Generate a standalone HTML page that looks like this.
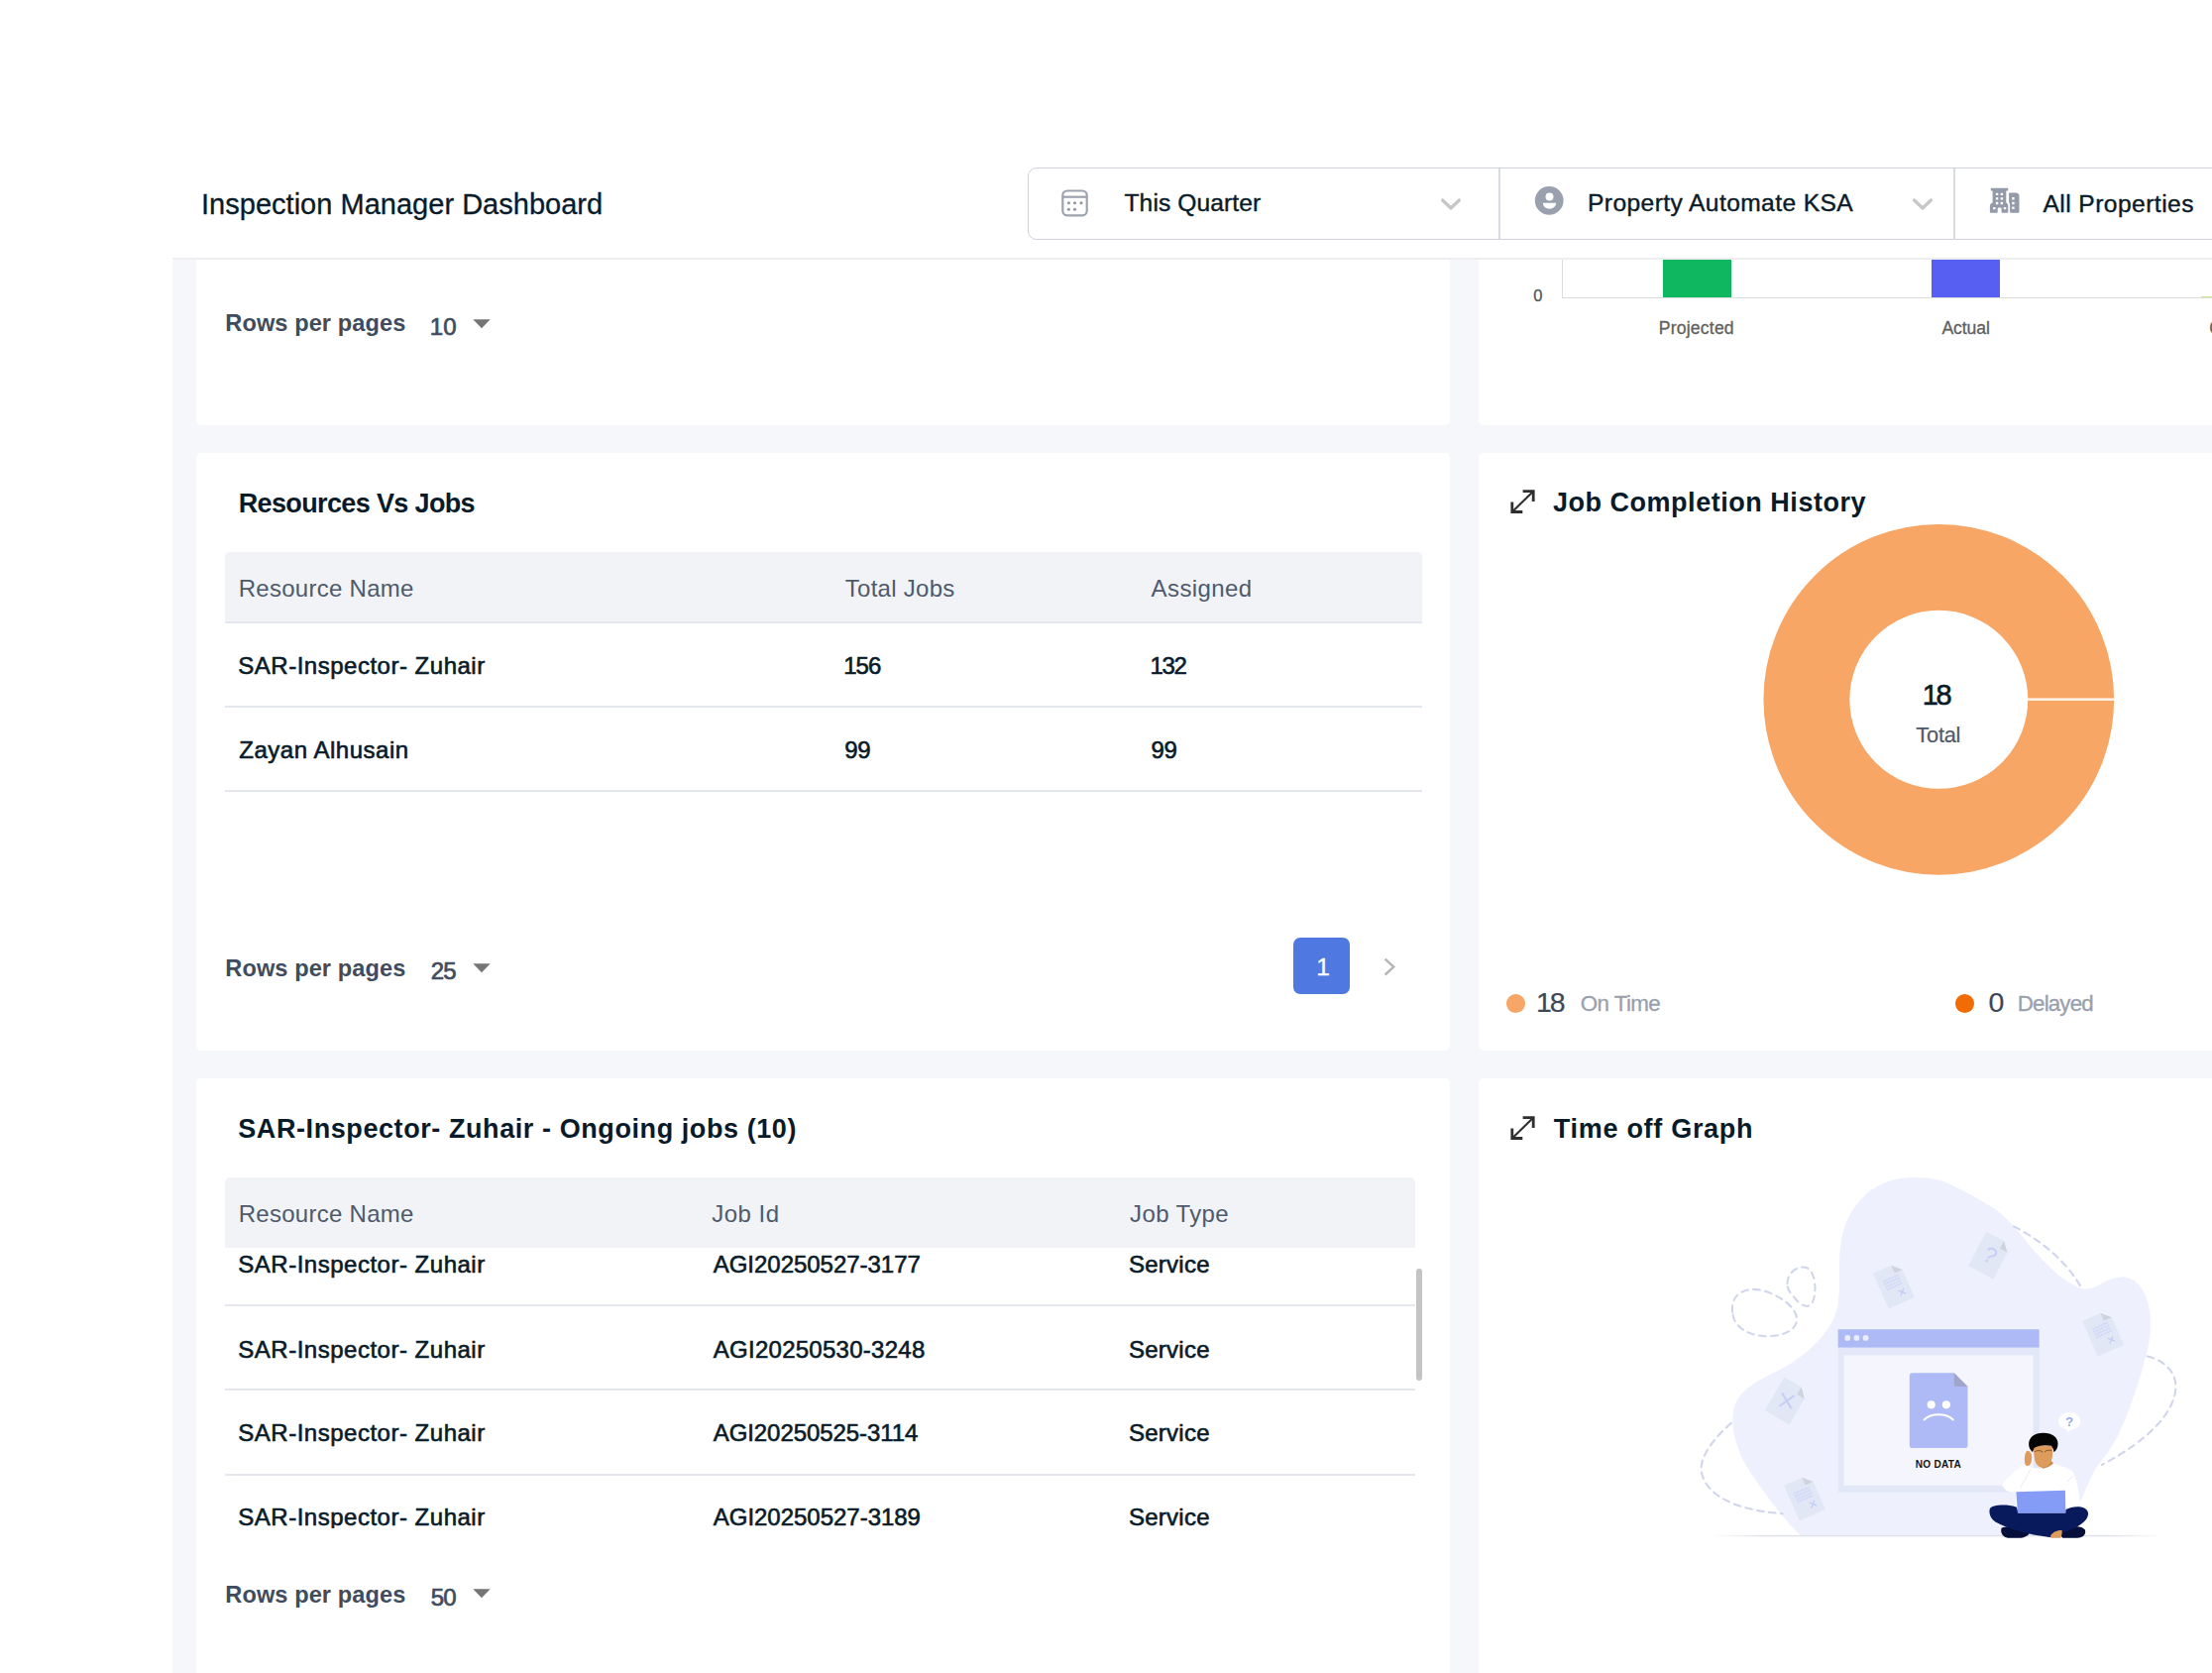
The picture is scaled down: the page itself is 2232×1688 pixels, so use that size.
<!DOCTYPE html>
<html lang="en">
<head>
<meta charset="utf-8">
<title>Inspection Manager Dashboard</title>
<style>
html,body{margin:0;padding:0;}
body{width:2232px;height:1688px;overflow:hidden;background:#fff;position:relative;font-family:"Liberation Sans", sans-serif;color:#091b29;}
.abs{position:absolute;}
.t{position:absolute;white-space:pre;line-height:1;}
.card{position:absolute;background:#fff;border-radius:5px;}
.thead{position:absolute;background:#f2f3f7;border-radius:5px 5px 0 0;}
</style>
</head>
<body>
<div class="abs" style="left:174px;top:250px;width:2058px;height:1438px;background:#f6f7fb"></div>

<!-- cards -->
<div class="card" style="left:197.7px;top:200px;width:1265.8px;height:228.7px;"></div>
<div class="card" style="left:197.7px;top:457.2px;width:1265.8px;height:602.5px;"></div>
<div class="card" style="left:197.7px;top:1088.2px;width:1265.8px;height:700px;"></div>
<div class="card" style="left:1491.5px;top:200px;width:900px;height:228.7px;"></div>
<div class="card" style="left:1491.5px;top:457.2px;width:900px;height:602.5px;"></div>
<div class="card" style="left:1491.5px;top:1088.2px;width:900px;height:700px;"></div>

<!-- card 1: tail of a table -->
<div class="t" style="left:227.30px;top:315.12px;font-size:23.6px;font-weight:bold;color:#404c5e;letter-spacing:0.08px;">Rows per pages</div>
<div class="t" style="left:433.80px;top:317.58px;font-size:24px;font-weight:normal;color:#404c5e;letter-spacing:0.0px;-webkit-text-stroke:0.7px #404c5e;">10</div>
<svg class="abs" style="left:476.8px;top:322px" width="18" height="10" viewBox="0 0 18 10"><path d="M0.3 0.3H17.7L9 9.3Z" fill="#757575"/></svg>

<!-- card 4: bar chart tail -->
<div class="abs" style="left:1575.5px;top:255px;width:1.5px;height:46px;background:#dcdcdc"></div>
<div class="abs" style="left:1575.5px;top:299.6px;width:700px;height:1.5px;background:#dcdcdc"></div>
<div class="abs" style="left:1678px;top:250px;width:69px;height:49.7px;background:#10b761"></div>
<div class="abs" style="left:1949.2px;top:250px;width:69.2px;height:49.7px;background:#575ff3"></div>
<div class="abs" style="left:2220.5px;top:298.6px;width:20px;height:1.5px;background:#cfe58f"></div>
<div class="t" style="left:1547.30px;top:290.13px;font-size:16.5px;font-weight:normal;color:#555;letter-spacing:0px;-webkit-text-stroke:0.3px #555;">0</div>
<div class="t" style="left:1673.80px;top:323.30px;font-size:17.6px;font-weight:normal;color:#606060;letter-spacing:0.19px;-webkit-text-stroke:0.3px #606060;">Projected</div>
<div class="t" style="left:1959.40px;top:323.30px;font-size:17.6px;font-weight:normal;color:#606060;letter-spacing:-0.08px;-webkit-text-stroke:0.3px #606060;">Actual</div>
<div class="t" style="left:2229.30px;top:323.30px;font-size:17.6px;font-weight:normal;color:#606060;letter-spacing:0px;-webkit-text-stroke:0.3px #606060;">C</div>

<!-- card 2: Resources Vs Jobs -->
<div class="thead" style="left:226.7px;top:557px;width:1208px;height:71px;"></div>
<div class="abs" style="left:226.7px;top:626.8px;width:1208px;height:2px;background:#e4e8ee"></div>
<div class="abs" style="left:226.7px;top:711.7px;width:1208px;height:2px;background:#e4e8ee"></div>
<div class="abs" style="left:226.7px;top:796.8px;width:1208px;height:2px;background:#e4e8ee"></div>
<div class="abs" style="left:1305.3px;top:946.2px;width:57px;height:57px;border-radius:7px;background:#5078e1"></div>
<svg class="abs" style="left:1394px;top:964px" width="18" height="24" viewBox="0 0 18 24" fill="none" stroke="#b5b5b5" stroke-width="2.4" stroke-linecap="square"><path d="M4.5 4.5L12.3 11.6L4.5 18.7"/></svg>
<div class="t" style="left:240.75px;top:494.74px;font-size:27px;font-weight:bold;color:#091b29;letter-spacing:-0.64px;">Resources Vs Jobs</div>
<div class="t" style="left:240.75px;top:582.28px;font-size:24px;font-weight:normal;color:#4e5a6b;letter-spacing:0.27px;">Resource Name</div>
<div class="t" style="left:852.80px;top:582.28px;font-size:24px;font-weight:normal;color:#4e5a6b;letter-spacing:0.27px;">Total Jobs</div>
<div class="t" style="left:1161.60px;top:582.28px;font-size:24px;font-weight:normal;color:#4e5a6b;letter-spacing:0.41px;">Assigned</div>
<div class="t" style="left:240.25px;top:659.78px;font-size:24px;font-weight:normal;color:#091b29;letter-spacing:0.51px;-webkit-text-stroke:0.6px #091b29;">SAR-Inspector- Zuhair</div>
<div class="t" style="left:851.20px;top:659.78px;font-size:24px;font-weight:normal;color:#091b29;letter-spacing:-1.0px;-webkit-text-stroke:0.6px #091b29;">156</div>
<div class="t" style="left:1160.60px;top:659.78px;font-size:24px;font-weight:normal;color:#091b29;letter-spacing:-1.45px;-webkit-text-stroke:0.6px #091b29;">132</div>
<div class="t" style="left:241.25px;top:744.78px;font-size:24px;font-weight:normal;color:#091b29;letter-spacing:0.52px;-webkit-text-stroke:0.6px #091b29;">Zayan Alhusain</div>
<div class="t" style="left:852.20px;top:744.78px;font-size:24px;font-weight:normal;color:#091b29;letter-spacing:-0.2px;-webkit-text-stroke:0.6px #091b29;">99</div>
<div class="t" style="left:1161.60px;top:744.78px;font-size:24px;font-weight:normal;color:#091b29;letter-spacing:-0.4px;-webkit-text-stroke:0.6px #091b29;">99</div>
<div class="t" style="left:227.30px;top:965.52px;font-size:23.6px;font-weight:bold;color:#404c5e;letter-spacing:0.08px;">Rows per pages</div>
<div class="t" style="left:434.80px;top:967.98px;font-size:24px;font-weight:normal;color:#404c5e;letter-spacing:-1.0px;-webkit-text-stroke:0.7px #404c5e;">25</div>
<div class="t" style="left:1328.20px;top:964.16px;font-size:24.5px;font-weight:normal;color:#fff;letter-spacing:0px;-webkit-text-stroke:0.3px #fff;">1</div>
<svg class="abs" style="left:476.8px;top:971.8px" width="18" height="10" viewBox="0 0 18 10"><path d="M0.3 0.3H17.7L9 9.3Z" fill="#757575"/></svg>

<!-- card 3: Ongoing jobs -->
<div class="abs" style="left:226.7px;top:1200px;width:1208px;height:342px;overflow:hidden">
<div class="abs" style="left:-226.7px;top:-1200px;width:2232px;height:1688px">
<div class="t" style="left:240.25px;top:1264.28px;font-size:24px;font-weight:normal;color:#091b29;letter-spacing:0.51px;-webkit-text-stroke:0.6px #091b29;">SAR-Inspector- Zuhair</div>
<div class="t" style="left:719.75px;top:1264.28px;font-size:24px;font-weight:normal;color:#091b29;letter-spacing:-0.03px;-webkit-text-stroke:0.6px #091b29;">AGI20250527-3177</div>
<div class="t" style="left:1139.00px;top:1264.28px;font-size:24px;font-weight:normal;color:#091b29;letter-spacing:0.25px;-webkit-text-stroke:0.6px #091b29;">Service</div>
<div class="t" style="left:240.25px;top:1349.78px;font-size:24px;font-weight:normal;color:#091b29;letter-spacing:0.51px;-webkit-text-stroke:0.6px #091b29;">SAR-Inspector- Zuhair</div>
<div class="t" style="left:719.75px;top:1349.78px;font-size:24px;font-weight:normal;color:#091b29;letter-spacing:0.27px;-webkit-text-stroke:0.6px #091b29;">AGI20250530-3248</div>
<div class="t" style="left:1139.00px;top:1349.78px;font-size:24px;font-weight:normal;color:#091b29;letter-spacing:0.25px;-webkit-text-stroke:0.6px #091b29;">Service</div>
<div class="t" style="left:240.25px;top:1433.85px;font-size:24px;font-weight:normal;color:#091b29;letter-spacing:0.51px;-webkit-text-stroke:0.6px #091b29;">SAR-Inspector- Zuhair</div>
<div class="t" style="left:719.75px;top:1433.85px;font-size:24px;font-weight:normal;color:#091b29;letter-spacing:-0.08px;-webkit-text-stroke:0.6px #091b29;">AGI20250525-3114</div>
<div class="t" style="left:1139.00px;top:1433.85px;font-size:24px;font-weight:normal;color:#091b29;letter-spacing:0.25px;-webkit-text-stroke:0.6px #091b29;">Service</div>
<div class="t" style="left:240.25px;top:1519.35px;font-size:24px;font-weight:normal;color:#091b29;letter-spacing:0.51px;-webkit-text-stroke:0.6px #091b29;">SAR-Inspector- Zuhair</div>
<div class="t" style="left:719.75px;top:1519.35px;font-size:24px;font-weight:normal;color:#091b29;letter-spacing:-0.02px;-webkit-text-stroke:0.6px #091b29;">AGI20250527-3189</div>
<div class="t" style="left:1139.00px;top:1519.35px;font-size:24px;font-weight:normal;color:#091b29;letter-spacing:0.25px;-webkit-text-stroke:0.6px #091b29;">Service</div>
<div class="abs" style="left:226.7px;top:1316px;width:1201.5px;height:2px;background:#e4e8ee"></div>
<div class="abs" style="left:226.7px;top:1401.3px;width:1201.5px;height:2px;background:#e4e8ee"></div>
<div class="abs" style="left:226.7px;top:1486.6px;width:1201.5px;height:2px;background:#e4e8ee"></div>
</div></div>
<div class="thead" style="left:226.7px;top:1187.7px;width:1201.5px;height:71.5px;"></div>
<div class="t" style="left:240.25px;top:1125.74px;font-size:27px;font-weight:bold;color:#091b29;letter-spacing:0.58px;">SAR-Inspector- Zuhair - Ongoing jobs (10)</div>
<div class="t" style="left:240.75px;top:1213.28px;font-size:24px;font-weight:normal;color:#4e5a6b;letter-spacing:0.27px;">Resource Name</div>
<div class="t" style="left:718.25px;top:1213.28px;font-size:24px;font-weight:normal;color:#4e5a6b;letter-spacing:0.5px;">Job Id</div>
<div class="t" style="left:1140.00px;top:1213.28px;font-size:24px;font-weight:normal;color:#4e5a6b;letter-spacing:0.39px;">Job Type</div>
<div class="abs" style="left:1428.8px;top:1279.6px;width:6px;height:113px;border-radius:3px;background:#c4c4c4"></div>
<div class="t" style="left:227.30px;top:1598.02px;font-size:23.6px;font-weight:bold;color:#404c5e;letter-spacing:0.08px;">Rows per pages</div>
<div class="t" style="left:434.80px;top:1600.48px;font-size:24px;font-weight:normal;color:#404c5e;letter-spacing:-1.0px;-webkit-text-stroke:0.7px #404c5e;">50</div>
<svg class="abs" style="left:476.8px;top:1603px" width="18" height="10" viewBox="0 0 18 10"><path d="M0.3 0.3H17.7L9 9.3Z" fill="#757575"/></svg>

<!-- card 5: donut -->
<svg class="abs" style="left:1510px;top:480px" width="60" height="50" viewBox="0 0 60 50" fill="none" stroke="#2e2e2e" stroke-linecap="butt" stroke-linejoin="miter"><path d="M36.6 16.3L16.4 35.9" stroke-width="2.1"/><path d="M26.6 15.7H37.2V26" stroke-width="2.8"/><path d="M15.8 26.6V36.5H26.3" stroke-width="2.8"/></svg>
<svg class="abs" style="left:1770px;top:520px" width="380" height="372" viewBox="1770 520 380 372">
<circle cx="1956.3" cy="705.8" r="133.4" fill="none" stroke="#f7a665" stroke-width="86.9"/>
<rect x="2045.5" y="704.4" width="89" height="2.5" fill="#fff4ea"/>
</svg>
<div class="abs" style="left:1520.2px;top:1002.5px;width:19px;height:19px;border-radius:50%;background:#f7a665"></div>
<div class="abs" style="left:1972.6px;top:1002.5px;width:19px;height:19px;border-radius:50%;background:#f26c05"></div>
<div class="t" style="left:1566.90px;top:494.04px;font-size:27px;font-weight:bold;color:#091b29;letter-spacing:0.53px;">Job Completion History</div>
<div class="t" style="left:1939.70px;top:687.35px;font-size:29px;font-weight:normal;color:#091b29;letter-spacing:-2.2px;-webkit-text-stroke:0.6px #091b29;">18</div>
<div class="t" style="left:1933.30px;top:730.75px;font-size:21.8px;font-weight:normal;color:#4e5a6b;letter-spacing:-0.22px;-webkit-text-stroke:0.2px #4e5a6b;">Total</div>
<div class="t" style="left:1550.00px;top:996.77px;font-size:28.5px;font-weight:normal;color:#3d4757;letter-spacing:-2.1px;-webkit-text-stroke:0.2px #3d4757;">18</div>
<div class="t" style="left:1594.70px;top:1002.02px;font-size:22.3px;font-weight:normal;color:#98a0ac;letter-spacing:-0.53px;-webkit-text-stroke:0.3px #98a0ac;">On Time</div>
<div class="t" style="left:2006.60px;top:996.77px;font-size:28.5px;font-weight:normal;color:#3d4757;letter-spacing:0px;-webkit-text-stroke:0.2px #3d4757;">0</div>
<div class="t" style="left:2035.80px;top:1002.02px;font-size:22.3px;font-weight:normal;color:#98a0ac;letter-spacing:-0.82px;-webkit-text-stroke:0.3px #98a0ac;">Delayed</div>

<!-- card 6: time off -->
<svg class="abs" style="left:1510px;top:1112.1px" width="60" height="50" viewBox="0 0 60 50" fill="none" stroke="#2e2e2e" stroke-linecap="butt" stroke-linejoin="miter"><path d="M36.6 16.3L16.4 35.9" stroke-width="2.1"/><path d="M26.6 15.7H37.2V26" stroke-width="2.8"/><path d="M15.8 26.6V36.5H26.3" stroke-width="2.8"/></svg>
<div class="t" style="left:1567.80px;top:1125.54px;font-size:27px;font-weight:bold;color:#091b29;letter-spacing:0.71px;">Time off Graph</div>
<svg class="abs" style="left:1700px;top:1170px" width="532" height="402" viewBox="0 0 2212 1671" font-family="Liberation Sans, sans-serif">
<defs>
<linearGradient id="gl" x1="0" x2="1" y1="0" y2="0"><stop offset="0" stop-color="#dfe1e8" stop-opacity="0"/><stop offset="0.12" stop-color="#dfe1e8"/><stop offset="0.88" stop-color="#dfe1e8"/><stop offset="1" stop-color="#dfe1e8" stop-opacity="0"/></linearGradient>
<g id="doc"><path d="M-55,-75H22L55,-42V75H-55Z" fill="#e2e7f6"/><path d="M22,-75L55,-42H22Z" fill="#cfd3df"/></g>
<g id="lines" stroke="#d3daf7" stroke-width="5"><path d="M-32,-30H32M-32,-18H32M-32,-6H32M-32,6H32"/><path d="M-30,-34V10M-18,-34V10M-6,-34V10M6,-34V10M18,-34V10M30,-34V10" stroke-width="3"/><path d="M8,26L30,48M30,26L8,48" stroke="#c3ccf5" stroke-width="5"/></g>
</defs>
<!-- blob -->
<path fill="#eef1fd" d="M950,75C1030,72 1080,88 1106,100C1180,135 1250,175 1306,210C1345,240 1375,275 1406,310C1440,350 1470,390 1506,425C1540,460 1570,490 1606,510C1630,525 1650,540 1675,542C1700,543 1715,537 1731,530C1760,515 1780,497 1830,492C1870,490 1900,515 1920,545C1940,580 1953,620 1955,680C1955,740 1945,790 1931,836C1918,890 1903,940 1886,986C1866,1045 1843,1105 1816,1161C1790,1210 1760,1250 1731,1286C1710,1320 1695,1353 1681,1386C1670,1410 1662,1428 1656,1446C1645,1490 1640,1535 1636,1578L490,1578C430,1530 350,1420 280,1320C220,1230 190,1130 205,1050C220,970 300,930 400,880C500,830 600,740 635,640C660,560 640,450 655,350C670,230 760,80 950,75Z"/>
<!-- dashed curves -->
<g fill="none" stroke="#d0d5ec" stroke-width="8.5" stroke-dasharray="28 22" stroke-linecap="round">
<path d="M200,640C190,560 260,530 330,550C400,570 470,620 470,670C470,720 400,745 330,740C260,735 205,700 200,640Z"/>
<path d="M430,520C430,470 480,440 515,455C550,475 555,560 535,600C520,625 490,615 465,585C445,560 430,550 430,520Z"/>
<path d="M195,1105C120,1170 60,1250 70,1310C85,1400 200,1470 410,1485"/>
<path d="M1380,280C1480,330 1600,420 1665,540"/>
<path d="M1940,825C2010,840 2060,890 2060,950C2060,1050 1960,1170 1750,1280"/>
</g>
<!-- faded docs -->
<g transform="translate(877,527) rotate(-24) scale(1.08)"><use href="#doc"/><use href="#lines"/></g>
<g transform="translate(1280,402) rotate(28) scale(1.08)"><use href="#doc"/><text x="0" y="28" font-size="86" fill="#c6cef5" text-anchor="middle">?</text></g>
<g transform="translate(1755,727) rotate(-24) scale(1.08)"><use href="#doc"/><use href="#lines"/></g>
<g transform="translate(428,1012) rotate(30) scale(1.08)"><use href="#doc"/><path d="M-24,-26L24,26M24,-26L-24,26" stroke="#c6cef5" stroke-width="8" transform="rotate(-18)"/></g>
<g transform="translate(503,1417) rotate(-24) scale(1.08)"><use href="#doc"/><use href="#lines"/></g>
<!-- ground line -->
<rect x="110" y="1575" width="1900" height="6" fill="url(#gl)"/>
<!-- browser window -->
<rect x="643" y="712" width="844" height="683" fill="#e2e8f8"/>
<rect x="643" y="712" width="844" height="76" fill="#aebaf5"/>
<circle cx="683" cy="748" r="12" fill="#e9edfd"/><circle cx="721" cy="748" r="12" fill="#e9edfd"/><circle cx="759" cy="748" r="12" fill="#e9edfd"/>
<rect x="668" y="820" width="794" height="547" fill="#f5f6fd"/>
<!-- sad document -->
<path d="M955,895H1130L1187,952V1198Q1187,1210 1175,1210H955Q943,1210 943,1198V907Q943,895 955,895Z" fill="#aebaf5"/>
<path d="M1130,895L1187,952H1138Q1130,952 1130,944Z" fill="#9fa6c9"/>
<circle cx="1034" cy="1028" r="17" fill="#fff"/><circle cx="1097" cy="1028" r="17" fill="#fff"/>
<path d="M1004,1091C1035,1062 1095,1062 1126,1091" fill="none" stroke="#fff" stroke-width="8" stroke-linecap="round"/>
<text x="1064" y="1293" font-size="42" font-weight="bold" fill="#161616" text-anchor="middle" letter-spacing="1">NO DATA</text>
</svg>
<svg class="abs" style="left:1990px;top:1410px" width="140" height="150" viewBox="0 0 1561 1673" font-family="Liberation Sans, sans-serif">
<!-- speech bubble -->
<ellipse cx="1095" cy="265" rx="125" ry="100" fill="#fff"/>
<path d="M1050,340L1080,395L1115,350Z" fill="#fff"/>
<text x="1095" y="318" font-size="150" font-weight="bold" fill="#9aa9ea" text-anchor="middle">?</text>
<!-- shirt -->
<path fill="#fff" d="M600,770C660,800 740,790 800,800C850,790 880,760 905,735C1000,770 1100,800 1135,840C1170,900 1200,1050 1215,1185C1180,1230 1120,1245 1060,1245H500C490,1180 490,1120 495,1065C440,1075 370,1060 340,990C350,940 440,870 560,760Z"/>
<path d="M655,810C620,880 580,950 545,1010" stroke="#dcdce0" stroke-width="7" fill="none"/>
<path d="M1135,880C1110,910 1090,930 1065,950" stroke="#dcdce0" stroke-width="7" fill="none"/>
<!-- neck+face -->
<path fill="#c98748" d="M860,690L915,740C880,775 850,790 800,800L760,770Z"/>
<path fill="#dd9b5c" d="M690,560C760,540 850,535 900,548C912,610 905,690 880,740C850,780 810,795 770,785C730,770 705,730 700,680C695,640 690,600 690,560Z"/>
<path d="M705,610C740,590 770,595 795,615M815,612C840,590 870,588 895,600" stroke="#6e4520" stroke-width="9" fill="none"/>
<!-- hair -->
<path fill="#050505" d="M800,400C900,400 965,450 965,520C965,570 945,600 920,615C915,585 905,560 890,545C820,530 750,540 700,565C690,585 685,600 680,615C650,590 635,560 637,520C640,450 700,400 800,400Z"/>
<!-- hand -->
<path fill="#dd9b5c" d="M625,600C660,605 680,650 668,710C660,750 640,775 615,770C590,760 585,700 592,660C598,625 605,605 625,600Z"/>
<!-- legs -->
<path fill="#050f3a" d="M330,1470C380,1440 560,1450 640,1500C660,1540 600,1580 520,1582H400C340,1570 315,1520 330,1470Z"/>
<path fill="#050f3a" d="M1010,1480C1080,1440 1230,1440 1270,1490C1285,1540 1250,1580 1180,1582H1020C990,1560 990,1510 1010,1480Z"/>
<path fill="#081a5c" d="M198,1255C215,1205 400,1195 500,1235L520,1300H1050L1052,1262C1140,1215 1290,1215 1305,1300C1312,1390 1200,1460 1010,1530L900,1575C700,1560 420,1490 260,1400C205,1360 185,1305 198,1255Z"/>
<path fill="#dd9b5c" d="M880,1560C900,1515 960,1490 1010,1495C1015,1530 1005,1565 995,1582H890Z"/>
<!-- laptop -->
<path fill="#849cf5" d="M495,1062L1047,1046L1052,1298L512,1303Z"/>
</svg>


<!-- header -->
<div class="abs" style="left:0;top:0;width:2232px;height:260px;background:#fff"></div>
<div class="abs" style="left:174px;top:260.2px;width:2058px;height:2px;background:#eeeef0"></div>
<div class="abs" style="left:1037.3px;top:168.7px;width:1300px;height:73.8px;border:1.8px solid #cfd2da;border-radius:9px;box-sizing:border-box;background:#fff;"></div>
<div class="abs" style="left:1512.3px;top:170px;width:1.5px;height:71.5px;background:#d8dbe1"></div>
<div class="abs" style="left:1971px;top:170px;width:1.5px;height:71.5px;background:#d8dbe1"></div>
<svg class="abs" style="left:1448.6px;top:194.9px" width="30" height="24" viewBox="0 0 30 24" fill="none" stroke="#c7c7c7" stroke-width="3.3" stroke-linecap="round" stroke-linejoin="round"><path d="M6.6 7L15 15L23.4 7"/></svg>
<svg class="abs" style="left:1925.1px;top:194.9px" width="30" height="24" viewBox="0 0 30 24" fill="none" stroke="#c7c7c7" stroke-width="3.3" stroke-linecap="round" stroke-linejoin="round"><path d="M6.6 7L15 15L23.4 7"/></svg>
<svg class="abs" style="left:1056px;top:180px" width="60" height="50" viewBox="0 0 60 50">
<rect x="16.3" y="12.5" width="24.4" height="24.9" rx="4.6" fill="none" stroke="#9da3ae" stroke-width="2.2"/>
<rect x="16.3" y="17.6" width="24.4" height="2.2" fill="#9da3ae"/>
<g fill="#8f95a1"><circle cx="22.4" cy="24.8" r="1.55"/><circle cx="28.5" cy="24.8" r="1.55"/><circle cx="35" cy="24.8" r="1.55"/><circle cx="22.4" cy="31.2" r="1.55"/><circle cx="28.5" cy="31.2" r="1.55"/></g>
</svg>
<svg class="abs" style="left:1536px;top:176px" width="60" height="50" viewBox="0 0 60 50">
<path fill="#9aa0ad" fill-rule="evenodd" d="M27.2 12A14.4 14.4 0 1 0 27.2 40.8A14.4 14.4 0 1 0 27.2 12ZM27.5 18.4A4 4 0 1 1 27.5 26.4A4 4 0 1 1 27.5 18.4ZM20.9 28.8H34.1C34.1 32.3 31 34.7 27.5 34.7C24 34.7 20.9 32.3 20.9 28.8Z"/>
</svg>
<svg class="abs" style="left:1996px;top:178px" width="60" height="50" viewBox="0 0 60 50">
<path fill="#939aa8" fill-rule="evenodd" d="M13.4 11.7H29.7Q30.3 11.7 30.3 12.3V14Q30.3 14.6 29.7 14.6H28.3V26.6Q30.3 27.6 30.3 29.6V36.1Q30.3 36.8 29.6 36.8H24.3Q23.6 36.8 23.6 36.1V32.6Q23.6 31.6 22.6 31.6H20.7Q19.7 31.6 19.7 32.6V36.1Q19.7 36.8 19 36.8H12.6Q11.9 36.8 11.9 36.1V29.6Q11.9 27.6 14.6 26.6V14.6H13.4Q12.8 14.6 12.8 14V12.3Q12.8 11.7 13.4 11.7Z
M17.9 16.7H20.3V19.1H17.9ZM22.7 16.7H25.1V19.1H22.7ZM17.9 21.2H20.3V23.6H17.9ZM22.7 21.2H25.1V23.6H22.7ZM17.9 25.8H20.3V28.2H17.9ZM22.7 25.8H25.1V28.2H22.7ZM15.1 30.9H17.5V33.3H15.1ZM25.8 30.9H28.2V33.3H25.8Z"/>
<path fill="#939aa8" fill-rule="evenodd" d="M31.1 17.1Q31.1 16.4 31.8 16.4H37.9Q41.5 16.4 41.5 20V36.1Q41.5 36.8 40.8 36.8H32.8Q32.1 36.8 32.1 36.1V29Q32.1 27.4 31.1 26ZM34.2 21.1H36.6V23.5H34.2ZM34.2 25.8H36.6V28.2H34.2ZM34.2 30.5H36.6V32.9H34.2Z"/>
</svg>

<div class="t" style="left:203.00px;top:191.55px;font-size:29px;font-weight:normal;color:#091b29;letter-spacing:0.02px;-webkit-text-stroke:0.3px #091b29;">Inspection Manager Dashboard</div>
<div class="t" style="left:1134.50px;top:193.38px;font-size:24.6px;font-weight:normal;color:#091b29;letter-spacing:0.09px;-webkit-text-stroke:0.4px #091b29;">This Quarter</div>
<div class="t" style="left:1602.00px;top:193.48px;font-size:24.6px;font-weight:normal;color:#091b29;letter-spacing:0.4px;-webkit-text-stroke:0.4px #091b29;">Property Automate KSA</div>
<div class="t" style="left:2061.40px;top:193.68px;font-size:24.6px;font-weight:normal;color:#091b29;letter-spacing:0.45px;-webkit-text-stroke:0.4px #091b29;">All Properties</div>
</body>
</html>
